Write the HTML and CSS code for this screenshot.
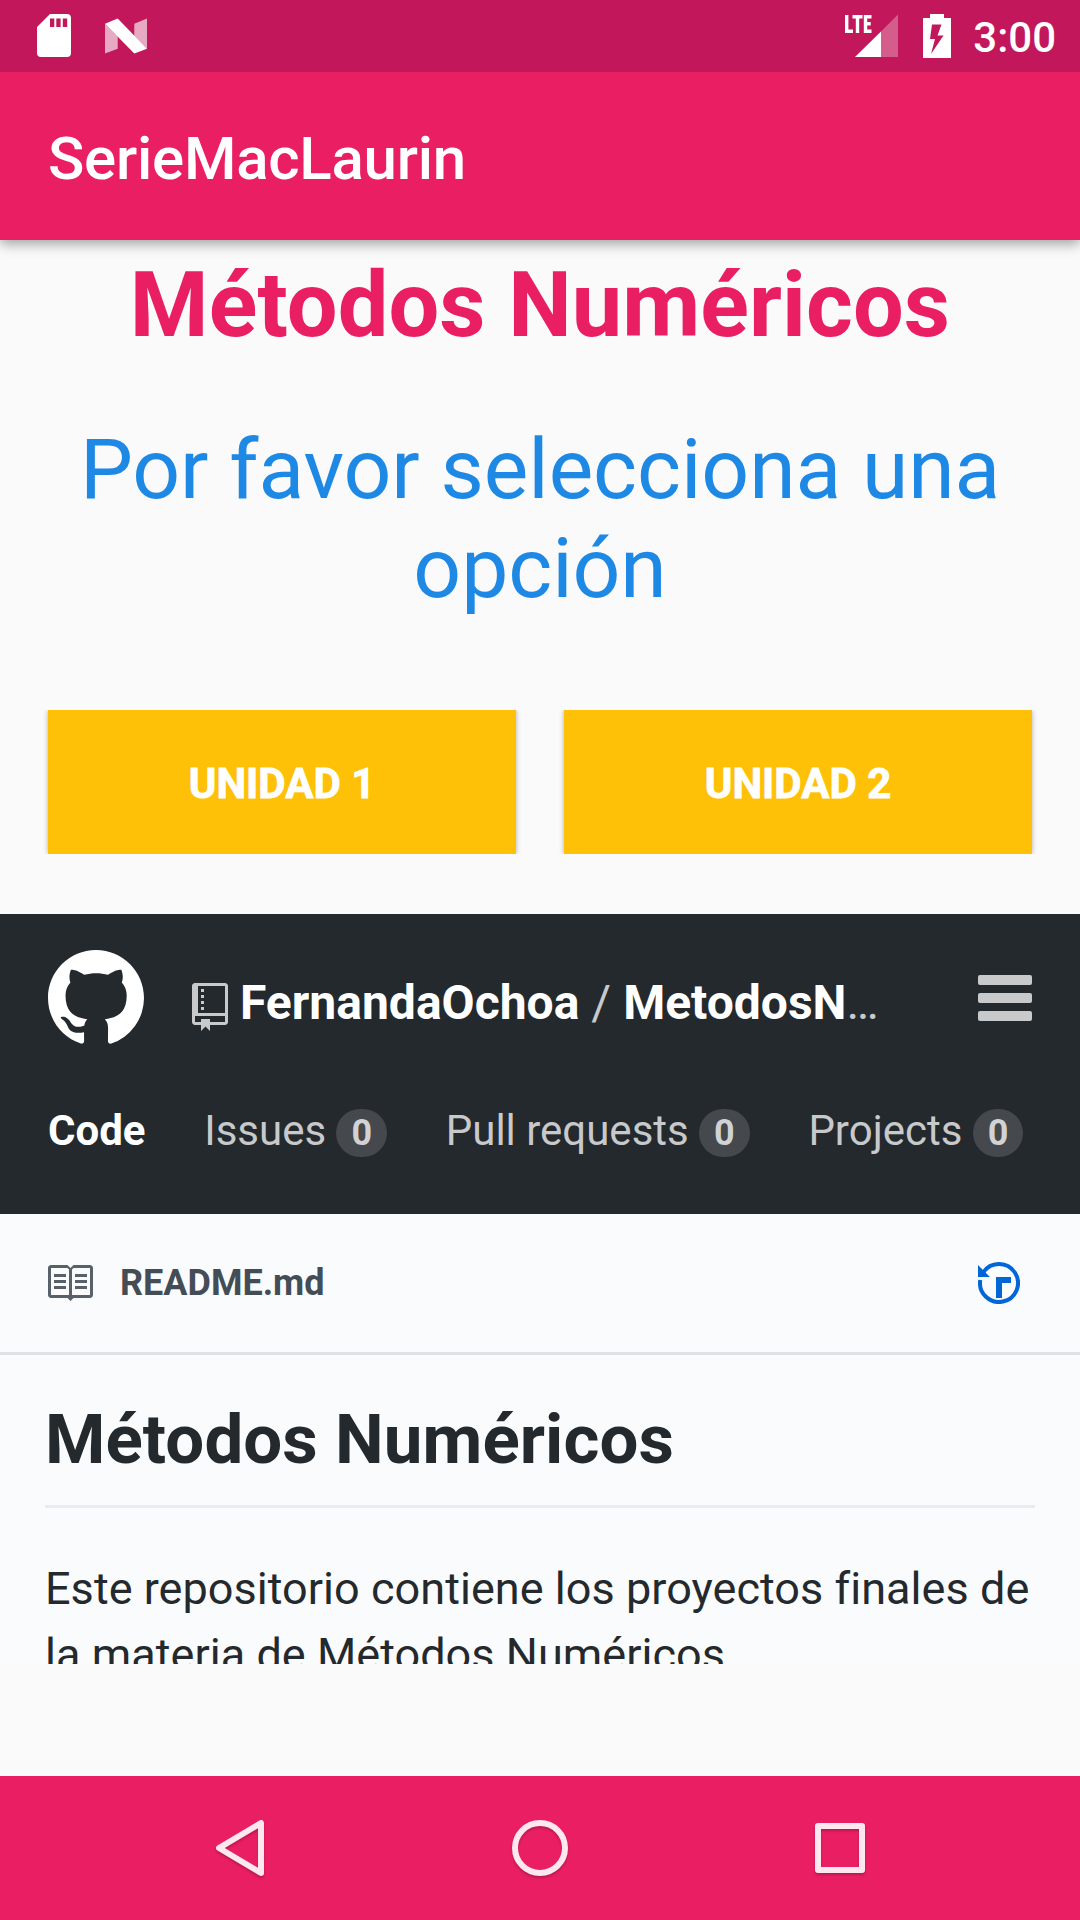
FILE: index.html
```html
<!DOCTYPE html>
<html lang="es">
<head>
<meta charset="utf-8">
<title>SerieMacLaurin</title>
<link rel="stylesheet" href="styles.css">
</head>
<body>
<div class="screen">
  <header class="status">
    <div class="status-left">
      <svg class="sd" viewBox="0 0 34 43"><path fill="#fff" fill-rule="evenodd" d="M13 0H30Q34 0 34 4V39Q34 43 30 43H4Q0 43 0 39V13ZM13 4.500V13H17.300V4.500ZM19.300 4.500V13H23.600V4.500ZM25.800 4.500V13H30.200V4.500Z"/></svg>
      <svg class="nougat" viewBox="0 0 43 36"><path fill="#fff" fill-opacity=".63" d="M0 5.500L13 18.500V31L0 36ZM43 0V31L30 18V5.500Z"/><path fill="#fff" d="M0 5.500L13 0L43 31L30 36Z"/></svg>
    </div>
    <div class="status-right">
      <svg class="signal" viewBox="0 0 54 44"><path fill="#fff" fill-opacity=".3" d="M53 .5V43H36V17.500Z"/><path fill="#fff" d="M10 43L36 17.500V43Z"/><path fill="none" stroke="#fff" stroke-width="3.400" d="M1.700 1V17.300H8M7.500 2.700H17.500M12.500 2.700V19M26.500 2.700H20.500V17.300H26.500M20.500 9.700H25.700"/></svg>
      <svg class="battery" viewBox="0 0 28 44"><path fill="#fff" fill-rule="evenodd" d="M7 0H21V4H28V44H0V4H7ZM9 10.500L7 25H12L8 40L20.500 21.500H14.500L18.500 10.500Z"/></svg>
      <span class="clock">3:00</span>
    </div>
  </header>
  <div class="appbar">SerieMacLaurin</div>
  <main class="content">
    <h1 class="title">Métodos Numéricos</h1>
    <p class="prompt">Por favor selecciona una opción</p>
    <div class="buttons">
      <button class="unit">UNIDAD 1</button>
      <button class="unit">UNIDAD 2</button>
    </div>
    <section class="web">
      <div class="gh">
        <div class="gh-top">
          <svg class="mark" viewBox="0 0 16 16"><path fill="#fff" fill-rule="evenodd" d="M8 0C3.580 0 0 3.580 0 8c0 3.540 2.290 6.530 5.470 7.590.4.070.55-.17.55-.38 0-.19-.01-.82-.01-1.490-2.010.37-2.530-.49-2.690-.94-.09-.23-.48-.94-.82-1.130-.28-.15-.68-.52-.01-.53.63-.01 1.080.58 1.230.82.72 1.210 1.870.87 2.330.66.070-.52.28-.87.51-1.070-1.780-.2-3.640-.89-3.640-3.950 0-.87.31-1.590.82-2.150-.08-.2-.36-1.020.08-2.120 0 0 .67-.21 2.200.82.64-.18 1.320-.27 2-.27.68 0 1.360.09 2 .27 1.530-1.040 2.200-.82 2.200-.82.44 1.100.16 1.920.08 2.120.51.56.82 1.270.82 2.150 0 3.070-1.870 3.750-3.650 3.950.29.25.54.73.54 1.480 0 1.070-.01 1.930-.01 2.200 0 .21.15.46.55.38A8.013 8.013 0 0 0 16 8c0-4.420-3.580-8-8-8z"/></svg>
          <div class="crumb">
            <svg class="repo" viewBox="0 0 12 16"><path fill="#c8c9cb" fill-rule="evenodd" d="M4 9H3V8h1v1zm0-3H3v1h1V6zm0-2H3v1h1V4zm0-2H3v1h1V2zm8-1v12c0 .55-.45 1-1 1H6v2l-1.500-1.500L3 16v-2H1c-.55 0-1-.45-1-1V1c0-.55.45-1 1-1h10c.55 0 1 .45 1 1zm-1 10H1v2h2v-1h3v1h5v-2zm0-10H2v9h9V1z"/></svg>
            <span class="path"><b>FernandaOchoa</b><span class="slash">/</span><b>MetodosN</b>…</span>
          </div>
          <div class="burger"><i></i><i></i><i></i></div>
        </div>
        <nav class="tabs">
          <span class="tab on">Code</span>
          <span class="tab">Issues<span class="count">0</span></span>
          <span class="tab">Pull requests<span class="count">0</span></span>
          <span class="tab">Projects<span class="count">0</span></span>
        </nav>
      </div>
      <div class="file">
        <svg class="book" viewBox="0 0 16 16"><path fill="#586069" fill-rule="evenodd" d="M3 5h4v1H3V5zm0 3h4V7H3v1zm0 2h4V9H3v1zm11-5h-4v1h4V5zm0 2h-4v1h4V7zm0 2h-4v1h4V9zm2-6v9c0 .55-.45 1-1 1H9.500l-1 1-1-1H2c-.55 0-1-.45-1-1V3c0-.55.45-1 1-1h5.500l1 1 1-1H15c.55 0 1 .45 1 1zm-8 .5L7.500 3H2v9h6V3.500zm7-.5H9.500l-.5.5V12h6V3z"/></svg>
        <span class="filename">README.md</span>
        <svg class="history" viewBox="0 0 42 42"><path fill="none" stroke="#0366d6" stroke-width="4" d="M5.470 10.050A19 19 0 1 1 2.240 18"/><path fill="#0366d6" d="M0 3V15H12ZM18 15H33V21H24V36H18Z"/></svg>
      </div>
      <article class="readme">
        <h2>Métodos Numéricos</h2>
        <p>Este repositorio contiene los proyectos finales de la materia de Métodos Numéricos</p>
      </article>
    </section>
  </main>
  <footer class="navbar">
    <svg viewBox="0 0 1080 144" fill="none" stroke="#fde8ef" stroke-width="6" stroke-linejoin="round"><path d="M261 47V97L219 72Z"/><circle cx="540" cy="72" r="25"/><rect x="818" y="50" width="44" height="44"/></svg>
  </footer>
</div>
</body>
</html>
```
FILE: styles.css
```css
* { box-sizing: border-box; margin: 0; padding: 0; }
body { background: #fafafa; font-family: Roboto, sans-serif; }
svg { display: block; flex: none; }
.screen { width: 1080px; height: 1920px; display: flex; flex-direction: column; overflow: hidden; }

.status { position: relative; z-index: 1; height: 72px; background: #c2185b; display: flex; justify-content: space-between; padding: 14px 24px 0 37px; }
.status-left, .status-right { display: flex; align-items: flex-start; }
.sd { width: 34px; height: 43px; margin-right: 34px; }
.nougat { width: 42px; height: 36px; margin-top: 4px; }
.signal { width: 54px; height: 44px; margin-right: 24px; }
.battery { width: 28px; height: 44px; margin-right: 22px; }
.clock { color: #fff; font-size: 42px; line-height: 48px; font-weight: 500; }

.appbar { height: 168px; background: #e91e63; color: #fff; font-size: 60px; font-weight: 500; line-height: 173px; letter-spacing: -.24px; padding-left: 48px; position: relative; box-shadow: 0 4px 12px rgba(0, 0, 0, .36); }

.content { flex: 1; display: flex; flex-direction: column; text-align: center; }
.title { color: #e91e63; font-size: 90px; line-height: 106px; font-weight: 700; letter-spacing: .1px; margin-top: 13px; }
.prompt { color: #1e88e5; font-size: 84px; line-height: 99px; letter-spacing: -.06px; margin-top: 61px; padding: 0 48px; }
.buttons { display: flex; gap: 48px; padding: 0 48px 60px; margin-top: 92px; }
.unit { flex: 1; height: 144px; border: 0; background: #ffc107; color: #fff; font: 700 42px/48px Roboto, sans-serif; padding-top: 4px; -webkit-text-stroke: .8px #fff; box-shadow: 0 0 5px rgba(0, 0, 0, .3); clip-path: inset(0 -10px); }

.web { height: 750px; background: #fafbfc; text-align: left; overflow: hidden; }
.gh { height: 300px; background: #24292e; padding: 36px 48px 0; color: #c8c9cb; }
.gh-top { display: flex; height: 96px; }
.mark { width: 96px; height: 96px; margin-right: 48px; }
.crumb { flex: 1; display: flex; }
.repo { width: 36px; height: 48px; margin: 33px 12px 0 0; }
.path { font-size: 48px; line-height: 72px; margin-top: 17px; white-space: nowrap; }
.path b { color: #fff; font-weight: 700; }
.slash { margin: 0 12px; }
.burger { width: 54px; padding-top: 25px; display: flex; flex-direction: column; gap: 8px; }
.burger i { height: 10px; border-radius: 2px; background: #c8c9cb; }
.tabs { display: flex; gap: 58.7px; margin-top: 52px; font-size: 42px; line-height: 66px; white-space: nowrap; }
.tab { display: flex; align-items: center; }
.on { color: #fff; font-weight: 700; }
.count { margin: 4px 0 0 10.300px; font-size: 36px; line-height: 36px; padding: 6px 15px; border-radius: 24px; background: #45484d; font-weight: 700; color: #d1d2d3; }

.file { height: 141px; border-bottom: 3px solid #dfe1e4; display: flex; align-items: center; padding: 0 60px 0 45px; }
.book { width: 48px; height: 48px; }
.filename { flex: 1; margin-left: 27px; font-size: 36px; font-weight: 700; color: #444d56; }
.history { width: 42px; height: 42px; }

.readme { padding: 43px 45px 0; color: #24292e; }
.readme h2 { font-size: 69px; line-height: 84px; font-weight: 700; letter-spacing: .08px; padding-bottom: 23px; border-bottom: 3px solid #eaecef; }
.readme p { font-size: 45px; line-height: 66px; letter-spacing: .04px; margin-top: 48px; width: 1000px; }

.navbar { height: 144px; background: #e91e63; }
.navbar svg { width: 1080px; height: 144px; filter: drop-shadow(0 2px 1px rgba(0, 0, 0, .2)); }
```
